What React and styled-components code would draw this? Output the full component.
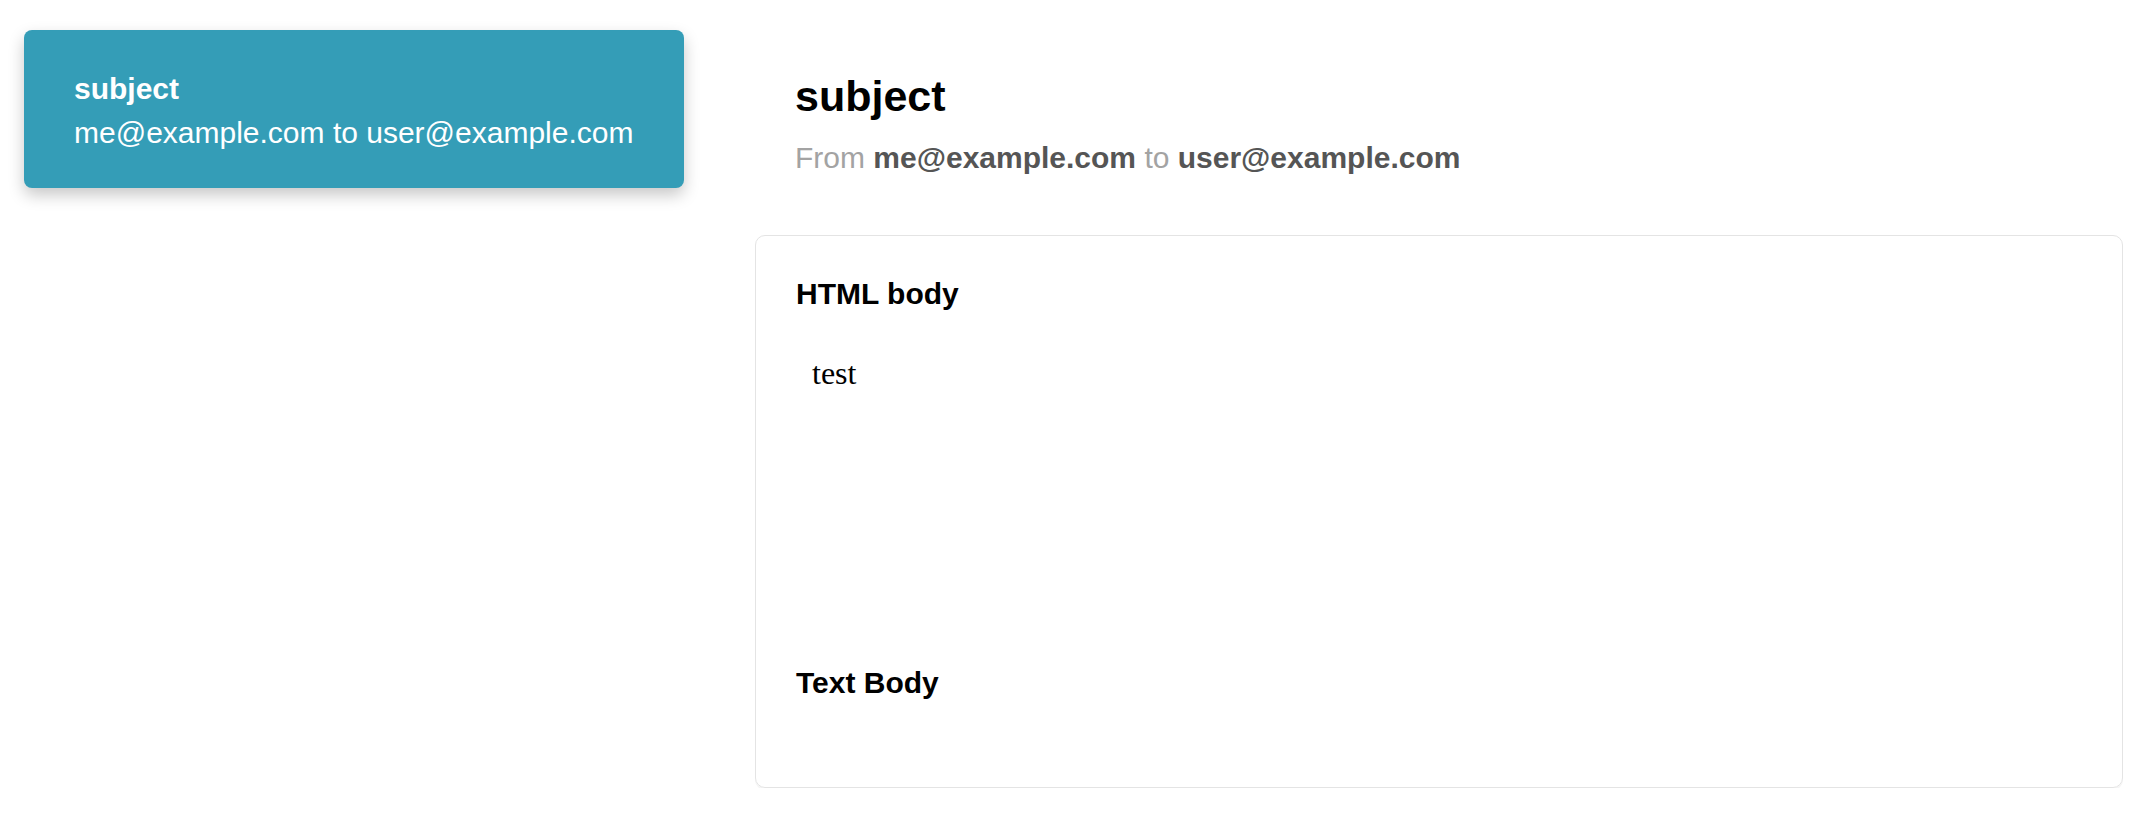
import styled, { createGlobalStyle } from 'styled-components';

const GlobalStyle = createGlobalStyle`
  html, body {
    margin: 0;
    padding: 0;
    background: #fff;
  }
  body {
    font-family: "Liberation Sans", Helvetica, Arial, sans-serif;
    color: #000;
  }
`;

const messages = [
  { id: 1, subject: 'subject', from: 'me@example.com', to: 'user@example.com', html: 'test', text: '' },
];

function App() {
  const current = messages[0];

  return (
    <>
      <GlobalStyle />
      <Wrapper>
        <MessageList>
          {messages.map(m => (
            <MessageItem key={m.id} active={m.id === current.id}>
              <ItemSubject>{m.subject}</ItemSubject>
              <ItemLine>{m.from} to {m.to}</ItemLine>
            </MessageItem>
          ))}
        </MessageList>

        <Main>
          <Header>
            <Subject>{current.subject}</Subject>
            <Meta>
              From <strong>{current.from}</strong> to <strong>{current.to}</strong>
            </Meta>
          </Header>

          <BodyCard>
            <SectionTitle>HTML body</SectionTitle>
            <HtmlFrame>{current.html}</HtmlFrame>

            <SectionTitle spaced>Text Body</SectionTitle>
            <TextBody>{current.text}</TextBody>
          </BodyCard>
        </Main>
      </Wrapper>
    </>
  );
}

export default App;

const Wrapper = styled.div`
  display: grid;
  grid-template-columns: 660px 1fr;
  column-gap: 71px;
  align-items: start;
  padding: 30px 29px 0 24px;
`;

const MessageList = styled.aside`
  display: flex;
  flex-direction: column;
  gap: 20px;
`;

const MessageItem = styled.div`
  background-color: ${props => props.active ? '#349db7' : '#fff'};
  color: ${props => props.active ? '#fff' : '#333'};
  border-radius: 8px;
  padding: 37px 50px 33px;
  box-shadow: 0 7px 16px rgba(0, 0, 0, 0.22);
  font-size: 30px;
  line-height: 44px;
`;

const ItemSubject = styled.div`
  font-weight: bold;
`;

const ItemLine = styled.div`
  font-weight: normal;
`;

const Main = styled.main`
  display: flex;
  flex-direction: column;
`;

const Header = styled.header`
  padding: 41px 40px 0;
  margin-bottom: 57px;
`;

const Subject = styled.h1`
  margin: 0 0 17px;
  font-size: 43px;
  line-height: 50px;
  font-weight: bold;
`;

const Meta = styled.div`
  font-size: 30px;
  line-height: 40px;
  color: #a3a3a3;

  strong {
    color: #555;
    font-weight: bold;
  }
`;

const BodyCard = styled.section`
  border: 1px solid #e4e4e4;
  border-radius: 10px;
  box-shadow: 0 2px 0 rgba(0, 0, 0, 0.04);
  padding: 41px 40px 0;
`;

const SectionTitle = styled.h3`
  margin: ${props => props.spaced ? '27px' : '0'} 0 0;
  font-size: 30px;
  line-height: 34px;
  font-weight: bold;
`;

const HtmlFrame = styled.div`
  margin-top: 28px;
  height: 300px;
  padding: 16px;
  box-sizing: border-box;
  font-family: "Liberation Serif", "Times New Roman", serif;
  font-size: 32px;
  line-height: normal;
`;

const TextBody = styled.pre`
  margin: 0;
  min-height: 87px;
  font-family: "Liberation Mono", monospace;
  font-size: 26px;
`;
